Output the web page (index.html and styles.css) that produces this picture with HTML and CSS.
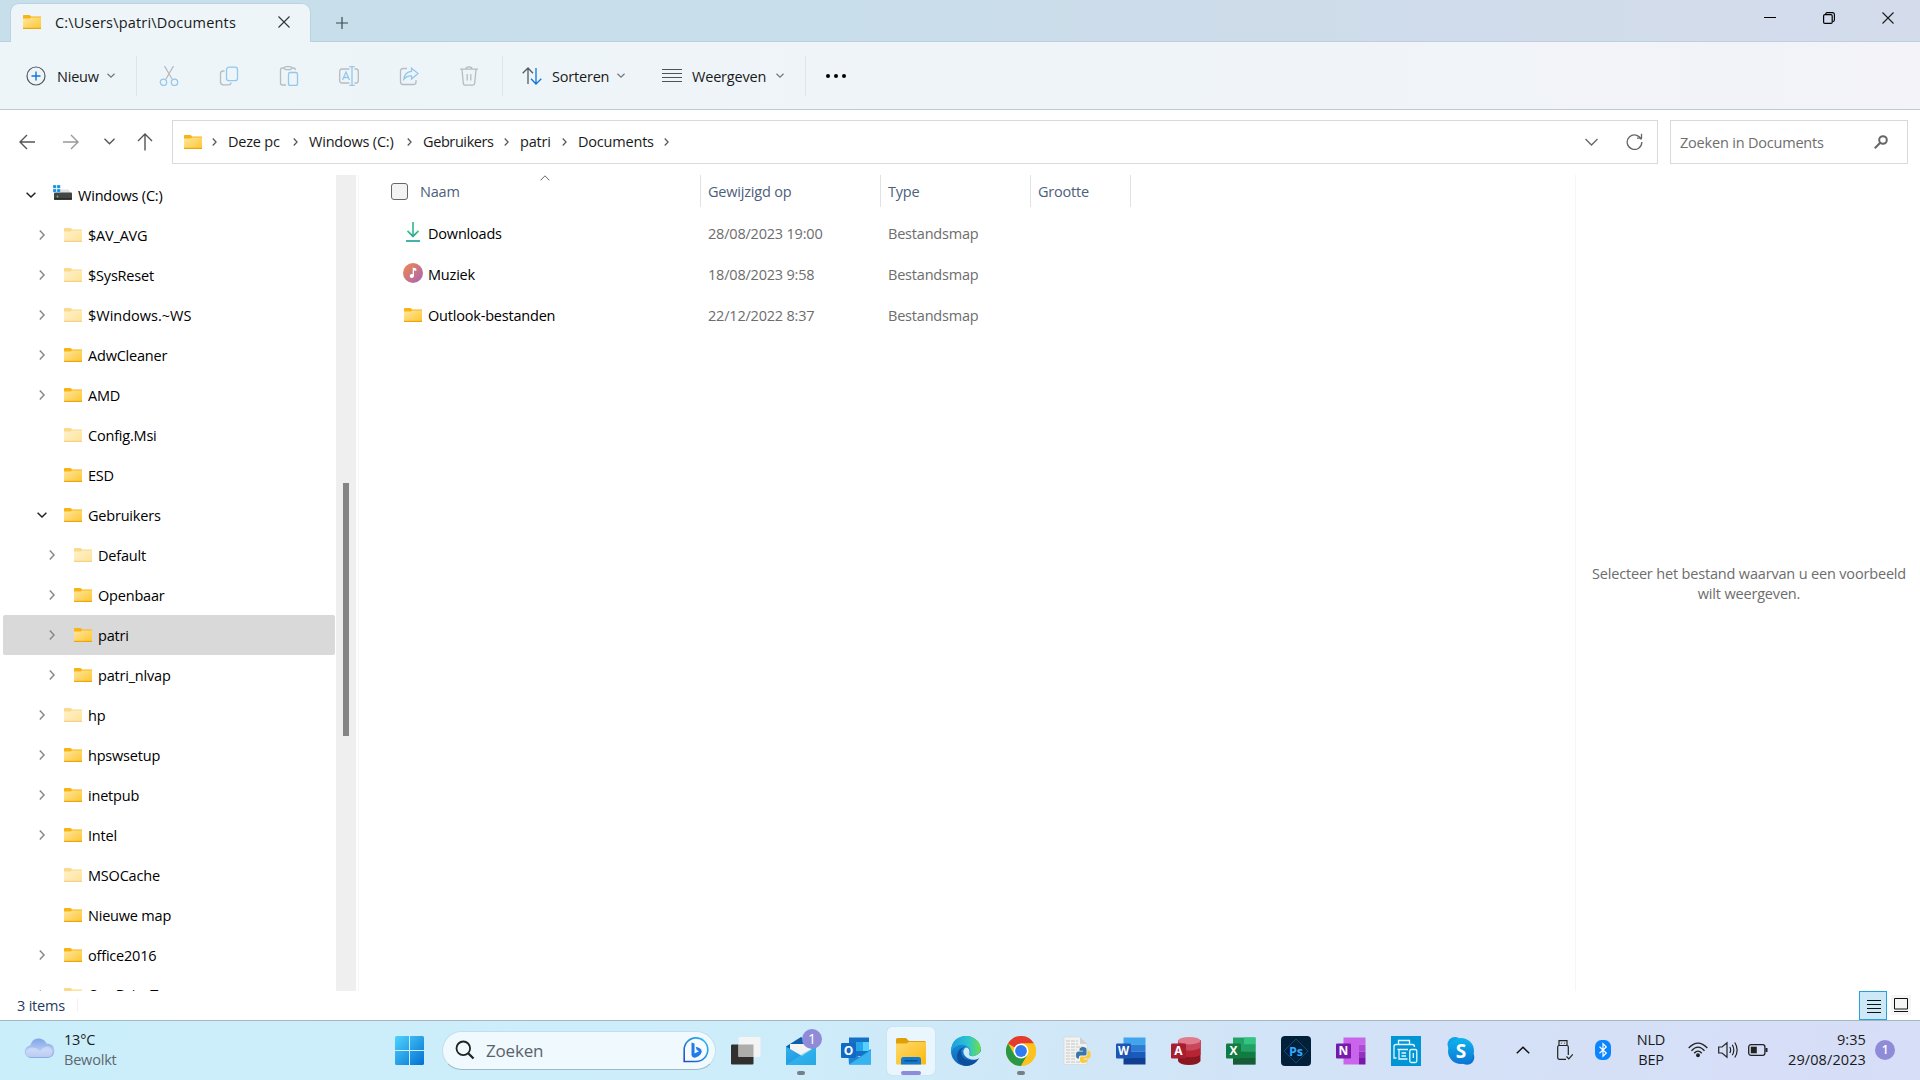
FILE: index.html
```html
<!DOCTYPE html>
<html lang="nl">
<head>
  <meta charset="UTF-8" />
  <title>C:\Users\patri\Documents</title>
  <link rel="stylesheet" href="styles.css">
</head>
<body>
  <!-- shared icons -->
  <svg class="defs" width="0" height="0">
    <defs>
      <linearGradient id="gFolder" x1="0" y1="0" x2="1" y2="1"><stop offset="0" stop-color="#ffe7a0"/><stop offset="1" stop-color="#fec62f"/></linearGradient>
      <linearGradient id="gMusic" x1="0" y1="0" x2="1" y2="1"><stop offset="0" stop-color="#f08a4b"/><stop offset="1" stop-color="#a862b8"/></linearGradient>
      <linearGradient id="gDown" x1="0" y1="0" x2="0" y2="1"><stop offset="0" stop-color="#3cc98a"/><stop offset="1" stop-color="#109a98"/></linearGradient>
      <linearGradient id="gCloud" x1="0" y1="0" x2="0" y2="1"><stop offset="0" stop-color="#7ea6ea"/><stop offset=".6" stop-color="#b3c8f1"/><stop offset="1" stop-color="#8ba8e6"/></linearGradient>
      <linearGradient id="gWin" x1="0" y1="0" x2="1" y2="1"><stop offset="0" stop-color="#4fd3fd"/><stop offset="1" stop-color="#0270d2"/></linearGradient>
      <linearGradient id="gBing" x1="1" y1="0" x2="0" y2="1"><stop offset="0" stop-color="#2bc3f0"/><stop offset="1" stop-color="#1b4fc4"/></linearGradient>
      <linearGradient id="gEdge" x1="0" y1="0" x2="1" y2="0"><stop offset="0" stop-color="#1a9fe0"/><stop offset=".55" stop-color="#2bc3d2"/><stop offset="1" stop-color="#6be04c"/></linearGradient>
      <linearGradient id="gEdge2" x1="0" y1="0" x2="0" y2="1"><stop offset="0" stop-color="#1b9de2"/><stop offset="1" stop-color="#0b62b8"/></linearGradient>
      <linearGradient id="gSkype" x1="0" y1="0" x2="0" y2="1"><stop offset="0" stop-color="#0fb5ee"/><stop offset="1" stop-color="#0a76d4"/></linearGradient>
      <linearGradient id="gMail" x1="0" y1="0" x2="1" y2="1"><stop offset="0" stop-color="#33b3ee"/><stop offset="1" stop-color="#1585d8"/></linearGradient>
      <linearGradient id="gExp" x1="0" y1="0" x2="1" y2="1"><stop offset="0" stop-color="#ffda6b"/><stop offset="1" stop-color="#fbb911"/></linearGradient>
    </defs>
    <symbol id="folder" viewBox="0 0 18 14">
      <path d="M0 .8Q0 0 .8 0H6.6L8.2 1.6H18V6H0z" fill="#f8b414"/>
      <path d="M0 3.6H6.8L8.2 2.4H18V14H0z" fill="url(#gFolder)"/>
      <path d="M0 13.4H18" stroke="#eaa50f" stroke-width="1.2"/>
    </symbol>
    <symbol id="right" viewBox="0 0 6 10"><path d="M.8.6L5 5 .8 9.4" fill="none" stroke="currentColor" stroke-width="1.5"/></symbol>
    <symbol id="down" viewBox="0 0 10 6"><path d="M.6.8L5 5 9.4.8" fill="none" stroke="currentColor" stroke-width="1.5"/></symbol>
    <symbol id="cross" viewBox="0 0 12 12"><path d="M.5.5l11 11M11.5.5l-11 11" fill="none" stroke="currentColor" stroke-width="1.1"/></symbol>
  </svg>

  <header class="titlebar">
    <div class="tab">
      <svg class="folder"><use href="#folder"/></svg>
      <span class="tab-title">C:\Users\patri\Documents</span>
      <svg class="tab-close"><use href="#cross"/></svg>
    </div>
    <svg class="tab-new" viewBox="0 0 12 12"><path d="M6 0v12M0 6h12" stroke="#3a4a52" stroke-width="1.2"/></svg>
    <div class="window-buttons">
      <svg width="12" height="12" viewBox="0 0 12 12"><path d="M0 5.5h12" stroke="#000"/></svg>
      <svg width="12" height="12" viewBox="0 0 12 12"><path d="M2.8 2.6V2Q2.8.6 4.3.6H9.4Q11.4.6 11.4 2.6V8Q11.4 9.6 9.6 9.6" fill="none" stroke="#000" stroke-width="1.1"/><rect x=".6" y="2.7" width="8.6" height="8.7" rx="1.2" fill="none" stroke="#000" stroke-width="1.2"/></svg>
      <svg width="12" height="12"><use href="#cross"/></svg>
    </div>
  </header>

  <nav class="toolbar">
    <div class="tool tool-new">
      <svg width="20" height="20" viewBox="0 0 20 20" fill="none"><circle cx="10" cy="10" r="9" stroke="#555b60" stroke-width="1.2"/><path d="M10 5.5v9M5.5 10h9" stroke="#0f78d4" stroke-width="1.4"/></svg>
      <span>Nieuw</span>
      <svg class="caret"><use href="#down"/></svg>
    </div>
    <div class="tool-icons">
      <svg viewBox="0 0 20 20"><path d="M5.5 0L13 13M14.5 0L7 13" stroke="#b6bcc1"/><circle cx="4.5" cy="16.3" r="3.2" stroke="#94c7ec"/><circle cx="15.5" cy="16.3" r="3.2" stroke="#94c7ec"/></svg>
      <svg viewBox="0 0 20 20"><path d="M5.5 5H4Q1.5 5 1.5 7.5V16Q1.5 18.8 4.2 18.8H9.5Q12 18.8 12 16.5" stroke="#b6bcc1"/><rect x="7.5" y="1.2" width="11" height="13.5" rx="2.5" stroke="#94c7ec"/></svg>
      <svg viewBox="0 0 20 20"><path d="M5.5 2H3.5Q1.5 2 1.5 4V17Q1.5 19 3.5 19H7M12.5 2H14.5Q16.3 2 16.3 4" stroke="#b6bcc1"/><rect x="5.5" y=".7" width="7" height="3" rx="1.5" stroke="#b6bcc1"/><rect x="9.5" y="6.5" width="9" height="13" rx="1.8" stroke="#94c7ec"/></svg>
      <svg viewBox="0 0 20 20"><path d="M10.5 3H3Q.7 3 .7 5.5V14.5Q.7 17 3 17H10.5M15.5 3H17Q19.3 3 19.3 5.5V14.5Q19.3 17 17 17H15.5" stroke="#b6bcc1"/><path d="M3.5 14L7 6l3.5 8M4.7 11.5h4.6M13 .7V19.3M10.3.7h5.4M10.3 19.3h5.4" stroke="#94c7ec"/></svg>
      <svg viewBox="0 0 20 20"><path d="M8 2.5H4Q1.5 2.5 1.5 5V16Q1.5 18.5 4 18.5H14.5Q17 18.5 17 16V14" stroke="#b6bcc1"/><path d="M12.5 2.2L19 7.5 12.5 13V10Q8 9.5 4.8 13.2 5.5 6 12.5 5.3z" stroke="#94c7ec"/></svg>
      <svg viewBox="0 0 20 20"><path d="M1 3.2H19M7 3Q7 .8 10 .8T13 3M3 3.5L4.3 17.2Q4.5 19.2 6.5 19.2H13.5Q15.5 19.2 15.7 17.2L17 3.5M8.2 8V14.5M11.8 8V14.5" stroke="#b6bcc1"/></svg>
    </div>
    <div class="tool tool-sort">
      <svg width="20" height="18" viewBox="0 0 20 18" fill="none" stroke-width="1.3"><path d="M6 17V1M.7 6.3L6 1l5 5.3" stroke="#555b60"/><path d="M14 1V17M9 11.7L14 17l5.3-5.3" stroke="#0f78d4"/></svg>
      <span>Sorteren</span>
      <svg class="caret"><use href="#down"/></svg>
    </div>
    <div class="tool tool-view">
      <svg width="20" height="14" viewBox="0 0 20 14"><path d="M0 .5h20M0 4.5h20M0 8.5h20M0 12.5h20" stroke="#4c5359" stroke-width="1.2"/></svg>
      <span>Weergeven</span>
      <svg class="caret"><use href="#down"/></svg>
    </div>
    <svg class="more" width="22" height="6" viewBox="0 0 22 6"><circle cx="3" cy="3" r="2"/><circle cx="11" cy="3" r="2"/><circle cx="19" cy="3" r="2"/></svg>
  </nav>

  <div class="addressbar">
    <div class="nav-buttons">
      <svg width="16" height="16" viewBox="0 0 16 16"><path d="M16 8H1M8 1L1 8l7 7"/></svg>
      <svg class="off" width="16" height="16" viewBox="0 0 16 16"><path d="M0 8H15M8 1l7 7-7 7"/></svg>
      <svg class="small" width="11" height="7" viewBox="0 0 11 7"><path d="M.5.8l5 5 5-5"/></svg>
      <svg width="16" height="18" viewBox="0 0 16 18"><path d="M8 17.5V1M1 8l7-7 7 7"/></svg>
    </div>
    <div class="path">
      <svg class="folder"><use href="#folder"/></svg>
      <svg class="sep"><use href="#right"/></svg><span class="c1">Deze pc</span>
      <svg class="sep"><use href="#right"/></svg><span class="c2">Windows (C:)</span>
      <svg class="sep"><use href="#right"/></svg><span class="c3">Gebruikers</span>
      <svg class="sep"><use href="#right"/></svg><span class="c4">patri</span>
      <svg class="sep"><use href="#right"/></svg><span class="c5">Documents</span>
      <svg class="sep"><use href="#right"/></svg>
      <div class="path-buttons">
        <svg width="13" height="8" viewBox="0 0 13 8"><path d="M.5 1l6 6 6-6"/></svg>
        <svg width="17" height="17" viewBox="0 0 17 17"><path d="M15.3 6.5A7.3 7.3 0 1 0 15.8 9M15.5.8V5.2H11"/></svg>
      </div>
    </div>
    <div class="search">
      <span>Zoeken in Documents</span>
      <svg width="14" height="14" viewBox="0 0 14 14" fill="none" stroke="#666" stroke-width="2"><circle cx="9" cy="5" r="3.8"/><path d="M6.2 7.8L.8 13.2"/></svg>
    </div>
  </div>

  <main class="content">
    <ul class="tree">
      <li class="root open"><svg class="arrow"><use href="#down"/></svg><svg class="drive" viewBox="0 0 19 16"><path d="M2 10L4 4.5H15.5L19 9.5z" fill="#dfe1e3"/><rect x="1" y="7.5" width="18" height="7.5" rx=".8" fill="#444"/><path d="M1 13.8H19" stroke="#222"/><circle cx="4.5" cy="11.5" r=".9" fill="#3ee05a"/><path d="M0 0h3.3v3.3H0zM4 0h3.3v3.3H4zM0 4h3.3v3.3H0zM4 4h3.3v3.3H4z" fill="#0e8fe0" stroke="#fff" stroke-width=".3"/></svg><span>Windows (C:)</span></li>
      <li class="hidden-item"><svg class="arrow"><use href="#right"/></svg><svg class="folder"><use href="#folder"/></svg><span>$AV_AVG</span></li>
      <li class="hidden-item"><svg class="arrow"><use href="#right"/></svg><svg class="folder"><use href="#folder"/></svg><span>$SysReset</span></li>
      <li class="hidden-item wide"><svg class="arrow"><use href="#right"/></svg><svg class="folder"><use href="#folder"/></svg><span>$Windows.~WS</span></li>
      <li><svg class="arrow"><use href="#right"/></svg><svg class="folder"><use href="#folder"/></svg><span>AdwCleaner</span></li>
      <li><svg class="arrow"><use href="#right"/></svg><svg class="folder"><use href="#folder"/></svg><span>AMD</span></li>
      <li class="hidden-item"><svg class="arrow"></svg><svg class="folder"><use href="#folder"/></svg><span>Config.Msi</span></li>
      <li><svg class="arrow"></svg><svg class="folder"><use href="#folder"/></svg><span>ESD</span></li>
      <li class="open"><svg class="arrow"><use href="#down"/></svg><svg class="folder"><use href="#folder"/></svg><span>Gebruikers</span></li>
      <li class="sub hidden-item"><svg class="arrow"><use href="#right"/></svg><svg class="folder"><use href="#folder"/></svg><span>Default</span></li>
      <li class="sub"><svg class="arrow"><use href="#right"/></svg><svg class="folder"><use href="#folder"/></svg><span>Openbaar</span></li>
      <li class="sub selected"><svg class="arrow"><use href="#right"/></svg><svg class="folder"><use href="#folder"/></svg><span>patri</span></li>
      <li class="sub"><svg class="arrow"><use href="#right"/></svg><svg class="folder"><use href="#folder"/></svg><span>patri_nlvap</span></li>
      <li class="hidden-item"><svg class="arrow"><use href="#right"/></svg><svg class="folder"><use href="#folder"/></svg><span>hp</span></li>
      <li><svg class="arrow"><use href="#right"/></svg><svg class="folder"><use href="#folder"/></svg><span>hpswsetup</span></li>
      <li><svg class="arrow"><use href="#right"/></svg><svg class="folder"><use href="#folder"/></svg><span>inetpub</span></li>
      <li><svg class="arrow"><use href="#right"/></svg><svg class="folder"><use href="#folder"/></svg><span>Intel</span></li>
      <li class="hidden-item"><svg class="arrow"></svg><svg class="folder"><use href="#folder"/></svg><span>MSOCache</span></li>
      <li><svg class="arrow"></svg><svg class="folder"><use href="#folder"/></svg><span>Nieuwe map</span></li>
      <li><svg class="arrow"><use href="#right"/></svg><svg class="folder"><use href="#folder"/></svg><span>office2016</span></li>
      <li class="hidden-item last"><svg class="arrow"><use href="#right"/></svg><svg class="folder"><use href="#folder"/></svg><span>OneDriveTemp</span></li>
    </ul>
    <div class="scrollbar"><div class="thumb"></div></div>

    <section class="files">
      <svg class="sort-mark" width="10" height="6" viewBox="0 0 10 6"><path d="M.6 5.3L5 .8l4.4 4.5" fill="none" stroke="#666"/></svg>
      <div class="row head">
        <div class="name"><i class="checkbox"></i>Naam</div>
        <div>Gewijzigd op</div>
        <div>Type</div>
        <div>Grootte</div>
      </div>
      <div class="row">
        <div class="name"><svg class="file-icon" viewBox="0 0 20 20"><path d="M4.5 8.8L10 14.3l5.5-5.5" fill="none" stroke="url(#gDown)" stroke-width="1.7"/><path d="M3 18.2h14v1.6H3z" fill="#17a193"/><path d="M9.2 0h1.6v14H9.2z" fill="#2cb78f"/></svg>Downloads</div>
        <div>28/08/2023 19:00</div>
        <div>Bestandsmap</div>
      </div>
      <div class="row">
        <div class="name"><svg class="file-icon" viewBox="0 0 20 20"><circle cx="10" cy="10" r="10" fill="url(#gMusic)"/><circle cx="8.8" cy="13" r="2.1" fill="#fff"/><path d="M9.7 13V4.5L13.3 5.5V8L11 7.3V13z" fill="#fff"/></svg>Muziek</div>
        <div>18/08/2023 9:58</div>
        <div>Bestandsmap</div>
      </div>
      <div class="row">
        <div class="name"><svg class="folder"><use href="#folder"/></svg>Outlook-bestanden</div>
        <div>22/12/2022 8:37</div>
        <div>Bestandsmap</div>
      </div>
    </section>

    <aside class="preview">
      <p>Selecteer het bestand waarvan u een voorbeeld<br>wilt weergeven.</p>
    </aside>
  </main>

  <footer class="status">
    <span>3 items</span>
    <i class="status-sep"></i>
    <div class="view-list"><svg width="20" height="20" viewBox="0 0 20 20"><path d="M3 4.5h14M3 8.5h14M3 12.5h14M3 16.5h14" stroke="#111"/></svg></div>
    <div class="view-large"><svg width="20" height="20" viewBox="0 0 20 20"><path d="M3.5 3.5h13v10.5h-13zM3 16.5h14" fill="none" stroke="#111"/></svg></div>
  </footer>

  <div class="taskbar">
    <div class="weather">
      <svg width="31" height="21" viewBox="0 0 31 21"><path d="M6.5 20A6.3 6.3 0 0 1 6 7.5Q8.5 0 15 .5 20.5.8 22.5 5.5 30 5.5 30.5 12.5 30 20 23 20z" fill="url(#gCloud)"/><path d="M6 19Q1 18.5 1.5 14.5 3 9 9 9.5 14 10 16 13 19 8 25 8.5 29.5 12 28 16.5 27 19 23 19z" fill="#dce5fa" opacity=".55"/></svg>
      <div>13°C<br><span>Bewolkt</span></div>
    </div>

    <svg class="start" viewBox="0 0 29 29"><path d="M1.5 0H14V14H0V1.5Q0 0 1.5 0zM15 0H27.5Q29 0 29 1.5V14H15zM0 15H14V29H1.5Q0 29 0 27.5zM15 15H29V27.5Q29 29 27.5 29H15z" fill="url(#gWin)"/></svg>

    <div class="task-search">
      <svg width="20" height="20" viewBox="0 0 20 20" fill="none" stroke="#222"><circle cx="8.3" cy="8.3" r="6.8" stroke-width="1.8"/><path d="M13.2 13.2L18.5 18.5" stroke-width="2.3"/></svg>
      <span>Zoeken</span>
      <svg width="26" height="26" viewBox="0 0 26 26"><path d="M1.2 24.5V13A11.8 11.8 0 1 1 13 24.5z" fill="#f7fbff" stroke="url(#gBing)" stroke-width="1.6"/><path d="M8.500 5.500l3 1.100V16.500l4.500-2.300-2.200-1.200-1.200-3.200Q18.500 11 18.800 14.500 18.500 17.500 15.500 19.200L12 20.800Q9 20.800 8.500 18z" fill="#1f7be8"/></svg>
    </div>

    <div class="apps">
      <div class="app"><svg viewBox="0 0 30 30"><rect x="0" y="8.5" width="22.5" height="20" rx="1" fill="#31302e"/><rect x="7.5" y="1" width="22" height="20" rx="1" fill="#f4f4f4"/><rect x="7.5" y="8.5" width="15" height="12.5" fill="#adadac"/></svg></div>
      <div class="app running"><svg viewBox="0 0 30 30"><path d="M0 10.5L15 1l15 9.5V14H0z" fill="#0b5ea8"/><path d="M4 8H26V20H4z" fill="#f3f3f3"/><path d="M0 10.5L16 20 30 10.5V29H0z" fill="url(#gMail)"/><path d="M0 29L15.5 18.5 30 10.5V29z" fill="#36bff2" opacity=".6"/></svg><b class="badge">1</b></div>
      <div class="app"><svg viewBox="0 0 30 30"><path d="M8 1.5H28V20H8z" fill="#1570c6"/><path d="M15 6h7v9h-7z" fill="#26a5ea"/><path d="M22 6h6v9h-6z" fill="#52d2fd"/><path d="M7 13l11 8 12-8V28.5H8z" fill="#1f83d6"/><path d="M8 28.5L30 14V28.5z" fill="#37b4ef"/><rect x="0" y="7" width="15" height="15" rx="1.2" fill="#1169c6"/><text x="7.5" y="19" font-size="12">O</text></svg></div>
      <div class="app active"><svg viewBox="0 0 30 30"><path d="M0 3.5Q0 2 1.5 2H10L13 5H28.5Q30 5 30 6.5V12H0z" fill="#dfa00c"/><path d="M0 7.5H10.5L13 6H30V27.5Q30 28.5 29 28.5H1Q0 28.5 0 27.5z" fill="url(#gExp)"/><path d="M5 28.5V23.5Q5 21 7.5 21H22.5Q25 21 25 23.5V28.5z" fill="#1479cf"/><path d="M8.5 24.8H21.5" stroke="#0b4d8c" stroke-width="1.3"/></svg></div>
      <div class="app"><svg viewBox="0 0 30 30"><circle cx="15" cy="15" r="15" fill="url(#gEdge2)"/><path d="M.4 12Q2 1 14.5 0 25 0 29 8.5 32 18 23 20 18 20 18.5 17.5 20.5 15 18 12 14 7.5 8 9 2 11 .4 16z" fill="url(#gEdge)"/><path d="M10 15Q10 24 20 24.5 24.5 24.5 27.5 22 23.5 30 14.5 30 5.5 28 6 19.5 7 12 13.5 11.2 10 13 10 15z" fill="#0d4f9c"/><path d="M12.3 15.5Q13 11.5 16 11.5 19 13 18.5 16.5 17.5 18.5 19 19.8 26 21.5 30 15V21L27.5 22.5Q23 25 17.5 22.5 12.5 20 12.3 15.5z" fill="#cfeaf7"/></svg></div>
      <div class="app running"><svg viewBox="0 0 30 30"><circle cx="15" cy="15" r="15" fill="#fcc31e"/><path d="M15 15L2 7.5A15 15 0 0 1 28 7.5H15z" fill="#e33b2e"/><path d="M2 7.5A15 15 0 0 0 15 30L21.5 18.7 15 15 8.5 18.7z" fill="#289847"/><path d="M15 7.5H28A15 15 0 0 1 15 30L21.5 18.7z" fill="#fcc31e"/><circle cx="15" cy="15" r="7.5" fill="#fff"/><circle cx="15" cy="15" r="5.9" fill="#2f7bf0"/></svg></div>
      <div class="app"><svg viewBox="0 0 30 30"><path d="M3 1H19L26 8V28.5H3z" fill="#f2f2f0" stroke="#d2d5d6" stroke-width=".6"/><path d="M19 1v7h7z" fill="#cfd2d4"/><path d="M5 5h12M5 8h12M5 11h18M5 14h11M5 17h9M5 20h9M5 23h10M5 26h15" stroke="#c4c8ca" stroke-dasharray="4 1"/><path d="M18.5 13.5Q18.5 11 22 11T25.5 13.5V18Q25.5 19.5 24 19.5H19.5Q18 19.5 18 21V22.5H16.5Q14.8 22 15 18.5T18 15.5H22V14.8H18.5z" fill="#3a76a8"/><path d="M26.5 14.5H28Q30 15.5 29.7 19T27 22.5H23V23.5H26.5V24.5Q26 27 22.5 27T19 24.5V21.5Q19 20.5 20.5 20.5H24.5Q26.5 20.5 26.5 18.5z" fill="#fbcb3d"/></svg></div>
      <div class="app"><svg viewBox="0 0 30 30"><path d="M7.5 1.5h22v7h-22z" fill="#41a5ee"/><path d="M7.5 8.5h22v7h-22z" fill="#2b7cd3"/><path d="M7.5 15.5h22v6.5h-22z" fill="#185abd"/><path d="M7.5 22h22v6.5h-22z" fill="#103f91"/><rect x="0" y="7.5" width="15" height="15" rx="1.2" fill="#1c55b5"/><text x="7.5" y="19" font-size="11.5">W</text></svg></div>
      <div class="app"><svg viewBox="0 0 30 30"><path d="M7 4v21Q9 29 18 29T29.5 25V4z" fill="#8c1522"/><path d="M7 4V20H12Q22 23 29.5 19V4z" fill="#b72434"/><path d="M7 4V12.5Q20 17 29.5 12V4z" fill="#c8475a"/><ellipse cx="18.3" cy="4.7" rx="11.2" ry="3.7" fill="#e07c8e"/><rect x="0" y="7.5" width="15" height="15" rx="1.2" fill="#a81e31"/><text x="7.5" y="19" font-size="12">A</text></svg></div>
      <div class="app"><svg viewBox="0 0 30 30"><path d="M7 1.5h22.5v27H7z" fill="#21a366"/><path d="M18 1.5h11.5v7H18z" fill="#33c481"/><path d="M7 15.5h22.5V22H7z" fill="#107c41"/><path d="M18 8.5h11.5v7H18z" fill="#23a066"/><path d="M7 22h22.5v6.5H7z" fill="#185c37"/><rect x="0" y="7.5" width="15" height="15" rx="1.2" fill="#117b41"/><text x="7.5" y="19" font-size="12">X</text></svg></div>
      <div class="app"><svg viewBox="0 0 30 30"><rect width="30" height="30" rx="4" fill="#02203a"/><path d="M15 3L27 15 15 27 3 15z" fill="none" stroke="#0d4a74"/><text x="15" y="19.5" font-size="12.5" class="ps">Ps</text></svg></div>
      <div class="app"><svg viewBox="0 0 30 30"><path d="M7.5 1.5h15.5v27H7.5z" fill="#ca64ea"/><path d="M23 1.5h6.5v7H23z" fill="#c868e8"/><path d="M23 8.5h6.5v7H23z" fill="#ae4bd5"/><path d="M23 15.5h6.5V22H23z" fill="#9332bf"/><path d="M23 22h6.5v6.5H23z" fill="#7719aa"/><rect x="0" y="7.5" width="15" height="15" rx="1.2" fill="#7719aa"/><text x="7.5" y="19" font-size="12">N</text></svg></div>
      <div class="app"><svg viewBox="0 0 30 30"><path d="M0 0h30v30H0z" fill="#0096d6"/><path d="M7.5 8V4.5H18.5V8M5.5 22H3V10.5Q3 8.5 5 8.5H21.5Q23.5 8.5 23.5 11M6.5 13.5H17M8 14V23H16.5M10.5 17H15M10.5 20H15" fill="none" stroke="#e6f7ff" stroke-width="1.3"/><rect x="18.8" y="13.5" width="7" height="13" rx="1.5" fill="#0096d6" stroke="#e6f7ff" stroke-width="1.3"/><path d="M22.3 17v5" stroke="#e6f7ff" stroke-width="1.3"/></svg></div>
      <div class="app"><svg viewBox="0 0 30 30"><circle cx="9" cy="8.5" r="7.5" fill="#0da3e4"/><circle cx="21" cy="21.5" r="7.3" fill="#0a76d4"/><circle cx="15" cy="15" r="13" fill="url(#gSkype)"/><text x="15" y="22" font-size="19">S</text></svg></div>
    </div>

    <div class="tray">
      <svg class="t-up" width="14" height="8" viewBox="0 0 14 8"><path d="M.8 7.3L7 1.2l6.2 6.1" fill="none" stroke="#111" stroke-width="1.5"/></svg>
      <svg class="t-usb" width="16" height="20" viewBox="0 0 16 20" fill="none" stroke="#222" stroke-width="1.2"><path d="M2 5.5V.7H10V5.5M9 19.3H2.5Q.7 19.3.7 17.5V7Q.7 5.5 2 5.5H10Q11.3 5.5 11.3 7V15M9.5 16.5l2.3 2.3 4-4.5M4.5 2.7v.9M7.5 2.7v.9"/></svg>
      <svg class="t-bt" width="16" height="20" viewBox="0 0 16 20"><rect width="16" height="20" rx="6.5" fill="#0a84ff"/><path d="M4.5 6.8L11.3 13 8 16.3V3.7L11.3 7 4.5 13.2" fill="none" stroke="#fff" stroke-width="1.2"/></svg>
      <div class="lang">NLD<br>BEP</div>
      <svg class="t-wifi" width="20" height="16" viewBox="0 0 20 16" fill="none" stroke="#222" stroke-width="1.3"><path d="M.7 6Q10-3.8 19.3 6M3.5 8.7Q10 1.5 16.5 8.7M6.2 11.3Q10 7 13.8 11.3"/><circle cx="10" cy="13.2" r="1.3" fill="#222"/></svg>
      <svg class="t-vol" width="20" height="18" viewBox="0 0 20 18" fill="none" stroke="#222" stroke-width="1.2"><path d="M.7 6H4L9 1.8V16.2L4 12H.7zM11.8 6Q13.5 9 11.8 12M14.3 3.7Q17.3 9 14.3 14.3M16.8 1.5Q21.5 9 16.8 16.5"/></svg>
      <svg class="t-bat" width="20" height="12" viewBox="0 0 20 12"><rect x=".7" y=".7" width="16.2" height="10.6" rx="2.2" fill="none" stroke="#222" stroke-width="1.3"/><rect x="2.8" y="2.7" width="6" height="6.6" fill="#222"/><path d="M17.5 4H19.5V8H17.5z" fill="#222"/></svg>
      <div class="clock">9:35<br>29/08/2023</div>
      <b class="badge">1</b>
    </div>
  </div>
</body>
</html>
```
FILE: styles.css
```css
* {
  box-sizing: border-box;
}
body {
  margin: 0;
  width: 1920px;
  height: 1080px;
  overflow: hidden;
  display: flex;
  flex-direction: column;
  font-family: "Open Sans", "Noto Sans", sans-serif;
  font-size: 14.5px;
  letter-spacing: -0.2px;
  color: #1a1a1a;
  background: #fff;
  white-space: nowrap;
}
svg {
  flex: none;
  display: block;
}
.defs {
  position: absolute;
}
.folder {
  width: 18px;
  height: 14px;
}

/* title bar */
.titlebar {
  height: 42px;
  display: flex;
  align-items: flex-end;
  padding-left: 10px;
  background: linear-gradient(90deg, #c7dfea 0%, #c8dfeb 40%, #cddcea 60%, #d4dcec 100%);
  border-bottom: 1px solid #bccfdc;
}
.tab {
  width: 301px;
  height: 39px;
  margin-bottom: -1px;
  display: flex;
  align-items: center;
  padding: 0 20px 2px 12px;
  background: #edf5f9;
  border: 1px solid #b9d3df;
  border-bottom: 0;
  border-radius: 9px 9px 0 0;
}
.tab-title {
  margin-left: 14px;
  flex: 1;
  letter-spacing: 0.18px;
}
.tab-close {
  width: 12px;
  height: 12px;
  color: #333;
}
.tab-new {
  width: 12px;
  height: 12px;
  margin: 0 0 12px 25px;
}
.window-buttons {
  display: flex;
  gap: 47px;
  margin: 0 26px 17px auto;
}

/* command bar */
.toolbar {
  height: 68px;
  display: flex;
  align-items: center;
  padding-left: 26px;
  background: linear-gradient(90deg, #edf5f9, #eff4f8 60%, #f3f3f9);
  border-bottom: 1px solid #bccbd6;
}
.tool {
  display: flex;
  align-items: center;
}
.tool span {
  margin-left: 10px;
  padding-top: 1px;
}
.caret {
  width: 8px;
  height: 5px;
  margin-left: auto;
  color: #70777c;
}
.tool-new {
  width: 89px;
}
.tool-new span {
  margin-left: 11px;
}
.tool-icons {
  height: 40px;
  display: flex;
  align-items: center;
  gap: 40px;
  margin-left: 21px;
  padding: 0 23px 0 22px;
  border: solid #dde5e9;
  border-width: 0 1px;
}
.tool-icons svg {
  width: 20px;
  height: 20px;
  fill: none;
  stroke-width: 1.3;
}
.tool-sort {
  width: 103px;
  margin-left: 19px;
}
.tool-view {
  width: 122px;
  margin-left: 37px;
}
.more {
  height: 40px;
  box-sizing: content-box;
  padding-left: 19px;
  margin-left: 21px;
  border-left: 1px solid #dde5e9;
}

/* address bar */
.addressbar {
  height: 65px;
  display: flex;
  align-items: center;
  padding: 0 12px 2px 19px;
}
.nav-buttons {
  width: 153px;
  display: flex;
  align-items: center;
}
.nav-buttons svg {
  margin-right: 28px;
  fill: none;
  stroke: #555;
  stroke-width: 1.4;
}
.nav-buttons .off {
  margin-right: 25px;
  stroke: #999;
}
.nav-buttons .small {
  margin: 0 22px 0 0;
}
.path {
  width: 1486px;
  height: 44px;
  display: flex;
  align-items: center;
  padding: 0 14px 0 11px;
  border: 1px solid #d9d9d9;
}
.sep {
  width: 5px;
  height: 8px;
  margin: 0 11px;
  color: #555;
}
.path .folder + .sep {
  margin-left: 10px;
}
.c1 {
  width: 54px;
}
.c2 {
  width: 87px;
}
.c3 {
  width: 70px;
  letter-spacing: -0.4px;
}
.c4 {
  width: 31px;
}
.c5 {
  width: 75px;
}
.path-buttons {
  display: flex;
  align-items: center;
  gap: 28px;
  margin-left: auto;
}
.path-buttons svg {
  fill: none;
  stroke: #666;
  stroke-width: 1.3;
}
.search {
  width: 238px;
  height: 44px;
  margin-left: 12px;
  display: flex;
  align-items: center;
  justify-content: space-between;
  padding: 1px 19px 0 9px;
  border: 1px solid #d9d9d9;
  color: #6e6e6e;
}

/* main panes */
.content {
  height: 816px;
  display: flex;
  overflow: hidden;
}
.tree {
  width: 336px;
  margin: 0;
  padding: 0 1px 0 3px;
  list-style: none;
  color: #000;
}
.tree li {
  height: 40px;
  display: flex;
  align-items: center;
  padding-left: 34px;
  border-radius: 2px;
}
.tree li.root {
  padding-left: 23px;
}
.tree li.sub {
  padding-left: 44px;
}
.tree li.selected {
  background: #d9d9d9;
}
.tree span {
  margin-left: 6px;
}
.tree .wide span {
  letter-spacing: 0;
}
.tree .last span {
  margin-top: -1px;
}
.arrow {
  width: 10px;
  height: 10px;
  margin-right: 17px;
  color: #888;
}
.open .arrow {
  height: 6px;
  color: #222;
}
.drive {
  width: 19px;
  height: 16px;
  margin-top: -5px;
}
.hidden-item .folder {
  opacity: 0.5;
}
.scrollbar {
  width: 20px;
  padding-top: 308px;
  background: #efefef;
}
.thumb {
  width: 6px;
  height: 253px;
  margin-left: 7px;
  background: #858585;
}
.files {
  flex: 1;
  position: relative;
  margin-left: 2px;
  border-left: 1px solid #f7f7f7;
}
.sort-mark {
  position: absolute;
  left: 181px;
  top: 0;
}
.row {
  height: 41px;
  display: grid;
  grid-template-columns: 342px 180px 150px 100px;
  align-items: center;
  color: #6d6d6d;
}
.row > div {
  padding-left: 7px;
}
.row .name {
  display: flex;
  align-items: center;
  padding-left: 45px;
  color: #000;
}
.row .folder,
.file-icon {
  width: 18px;
  margin-right: 6px;
}
.row .folder {
  margin-top: -2px;
}
.file-icon {
  width: 20px;
  height: 20px;
  margin: -3px 5px 0 -1px;
}
.row.head {
  height: 32px;
  margin-bottom: 6px;
  color: #4c607a;
}
.head > div {
  height: 32px;
  line-height: 33px;
  border-right: 1px solid #e2e2e2;
}
.row.head .name {
  padding-left: 32px;
  color: #4c607a;
}
.checkbox {
  width: 17px;
  height: 17px;
  margin-right: 12px;
  background: #f3f3f3;
  border: 1px solid #666;
  border-radius: 3px;
}
.preview {
  width: 345px;
  display: flex;
  align-items: center;
  justify-content: center;
  border-left: 1px solid #f5f5f5;
  color: #6d6d6d;
}
.preview p {
  margin: 2px 0 0 2px;
  line-height: 20px;
  text-align: center;
  letter-spacing: -0.17px;
}

/* status bar */
.status {
  height: 29px;
  display: flex;
  align-items: center;
  padding-left: 17px;
  color: #1f3a5f;
}
.status-sep {
  width: 1px;
  height: 13px;
  margin-left: 12px;
  background: #f0f0f0;
}
.view-list {
  width: 28px;
  height: 29px;
  margin-left: auto;
  padding: 4px 0 0 4px;
  background: #cde8f6;
  border: 1px solid #26a0da;
}
.view-large {
  width: 20px;
  height: 20px;
  margin: -2px 9px 0 4px;
  background: #f5f5f5;
}

/* taskbar */
.taskbar {
  height: 60px;
  display: flex;
  align-items: center;
  border-top: 1px solid #a5b7c0;
  background: linear-gradient(100deg, #cbeefb 0%, #cdedfa 38%, #d1e5f7 62%, #d4e1f7 75%, #d7def7 100%);
}
.weather {
  width: 370px;
  display: flex;
  align-items: center;
  padding: 0 0 2px 24px;
  line-height: 20px;
}
.weather svg {
  margin: -3px 9px 0 0;
}
.weather span {
  color: #5b686e;
}
.start {
  width: 29px;
  height: 29px;
  margin-left: 25px;
}
.task-search {
  width: 274px;
  height: 39px;
  margin-left: 18px;
  display: flex;
  align-items: center;
  padding: 0 6px 1px 12px;
  background: #f0f9fe;
  border: 1px solid #c3dfeb;
  border-bottom-color: #9dbac8;
  border-radius: 20px;
  font-size: 17px;
  color: #59636a;
}
.task-search span {
  margin-left: 11px;
  flex: 1;
}
.apps {
  display: flex;
  gap: 7px;
  margin-left: 6px;
}
.app {
  width: 48px;
  height: 48px;
  position: relative;
  display: flex;
  align-items: center;
  justify-content: center;
  border-radius: 5px;
}
.app svg {
  width: 30px;
  height: 30px;
}
.app text {
  fill: #fff;
  font-weight: 700;
  text-anchor: middle;
  letter-spacing: 0;
}
.app .ps {
  fill: #31a8ff;
}
.app.active {
  background: #e9f6fd;
  box-shadow: 0 0 1px #a9c4d2;
}
.app.running::after,
.app.active::after {
  content: "";
  position: absolute;
  left: 20px;
  bottom: 0;
  width: 8px;
  height: 4px;
  border-radius: 2px;
  background: #748087;
}
.app.active::after {
  left: 14px;
  width: 20px;
  background: #8f8bd8;
}
.badge {
  width: 20px;
  height: 20px;
  border-radius: 50%;
  background: #8f8bd8;
  color: #fff;
  font-size: 12px;
  font-weight: 600;
  line-height: 20px;
  text-align: center;
}
.app .badge {
  position: absolute;
  left: 25px;
  top: 2px;
  font-size: 14px;
  font-weight: 400;
}
.tray {
  flex: 1;
  display: flex;
  align-items: center;
  justify-content: flex-end;
  padding: 0 25px 2px 0;
  line-height: 20px;
}
.t-up {
  margin-right: 27px;
}
.t-usb {
  margin-right: 22px;
}
.lang {
  width: 32px;
  margin: 0 21px 0 24px;
  text-align: center;
}
.t-wifi {
  margin-right: 10px;
}
.t-vol {
  margin-right: 10px;
}
.clock {
  width: 98px;
  text-align: right;
  letter-spacing: 0.1px;
}
.tray .badge {
  margin-left: 9px;
}
```
